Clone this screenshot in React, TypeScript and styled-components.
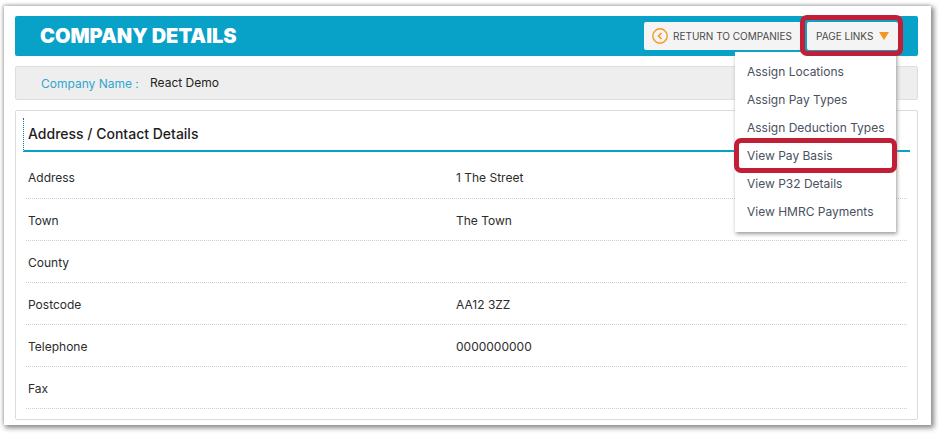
import React from 'react';
import styled, { createGlobalStyle } from 'styled-components';

const GlobalStyle = createGlobalStyle`
  html, body {
    margin: 0;
    background: #fff;
    font-family: Inter, "Liberation Sans", sans-serif;
  }
`;

const Page = styled.div`
  width: 941px;
  height: 434px;
  padding: 6px 10px 9px 4px;
  box-sizing: border-box;
  overflow: hidden;
`;

const Frame = styled.div`
  position: relative;
  height: 100%;
  box-sizing: border-box;
  padding: 10px 13px 5px 11px;
  background: #fff;
  box-shadow: 2px 2px 5px 1px #8a8a8a, -1px -1px 3px #c8c8c8;
  display: flex;
  flex-direction: column;
  gap: 10px;
`;

const Header = styled.header`
  height: 40px;
  flex: none;
  display: flex;
  align-items: center;
  padding: 0 20px 0 25px;
  background: #08a1c8;
  border-radius: 2px;
`;

const Title = styled.h1`
  flex: 1;
  margin: 0;
  color: #fff;
  font-size: 20px;
  font-weight: 900;
`;

const Actions = styled.div`
  display: flex;
  gap: 6px;
`;

const ActionButton = styled.button`
  height: 28px;
  display: flex;
  align-items: center;
  gap: 5px;
  padding: 0 8px;
  border: 0;
  border-radius: 2px;
  background: #f4f4f4;
  color: #4a4a4a;
  font: 400 10px Inter, sans-serif;
  white-space: nowrap;

  svg {
    flex: none;
  }
`;

const ReturnButton = styled(ActionButton)`
  width: 157px;
`;

const LinksButton = styled(ActionButton)`
  width: 91px;
  padding: 0 9px;
  gap: 6px;
`;

const InfoBar = styled.div`
  height: 34px;
  flex: none;
  box-sizing: border-box;
  display: flex;
  align-items: center;
  padding: 0 25px;
  background: #eeeeee;
  border: 1px solid #dedede;
  border-radius: 2px;
  font-size: 12px;
`;

const InfoLabel = styled.span`
  color: #2ea7d0;
  width: 109px;
`;

const InfoValue = styled.span`
  color: #222;
  margin-top: -2px;
`;

const Card = styled.section`
  flex: 1;
  box-sizing: border-box;
  padding: 7px 10px 0 10px;
  border: 1px solid #dcdcdc;
  border-radius: 2px;
`;

const CardTitle = styled.h2`
  height: 34px;
  margin: 0 -3px 5px -3px;
  box-sizing: border-box;
  padding: 7px 0 0 4px;
  border-left: 1px dotted #08769a;
  border-bottom: 2px solid #08a1c8;
  color: #1d1d1d;
  font-size: 14px;
  font-weight: 500;
`;

const Row = styled.div`
  height: 42px;
  box-sizing: border-box;
  display: grid;
  grid-template-columns: 428px 1fr;
  align-items: center;
  padding: 2px 0 0 2px;
  border-bottom: 1px dotted #cfcfcf;
  color: #2c2c2c;
  font-size: 12px;

  &:first-of-type {
    padding-top: 0;
  }
`;

const Menu = styled.ul`
  position: absolute;
  left: 731px;
  top: 46px;
  width: 161px;
  height: 180px;
  box-sizing: border-box;
  margin: 0;
  padding: 6px 0;
  list-style: none;
  background: #fff;
  box-shadow: 1px 2px 4px #9a9a9a;
`;

const MenuItem = styled.li`
  height: 28px;
  line-height: 27px;
  padding-left: 12px;
  color: #4a5160;
  font-size: 12px;
`;

const Highlight = styled.div`
  position: absolute;
  box-sizing: border-box;
  border: 5px solid #c21f37;
  border-radius: 7px;
  pointer-events: none;
`;

const LinksHighlight = styled(Highlight)`
  left: 796px;
  top: 9px;
  width: 103px;
  height: 41px;
`;

const PayBasisHighlight = styled(Highlight)`
  left: 730px;
  top: 132px;
  width: 163px;
  height: 35px;
`;

const rows = [
  ['Address', '1 The Street'],
  ['Town', 'The Town'],
  ['County', ''],
  ['Postcode', 'AA12 3ZZ'],
  ['Telephone', '0000000000'],
  ['Fax', ''],
];

const links = [
  'Assign Locations',
  'Assign Pay Types',
  'Assign Deduction Types',
  'View Pay Basis',
  'View P32 Details',
  'View HMRC Payments',
];

const App = () => (
  <Page>
    <GlobalStyle />
    <Frame>
      <Header>
        <Title>COMPANY DETAILS</Title>
        <Actions>
          <ReturnButton>
            <svg width="16" height="16" viewBox="0 0 16 16" fill="none" stroke="#f39a1f" strokeWidth="1.4">
              <circle cx="8" cy="8" r="7.2" />
              <path d="M9.5 5 6.5 8l3 3" strokeWidth="1.6" />
            </svg>
            RETURN TO COMPANIES
          </ReturnButton>
          <LinksButton>
            PAGE LINKS
            <svg width="10" height="8" viewBox="0 0 10 8">
              <path d="M0 0h10L5 8z" fill="#f7941d" />
            </svg>
          </LinksButton>
        </Actions>
      </Header>
      <InfoBar>
        <InfoLabel>Company Name :</InfoLabel>
        <InfoValue>React Demo</InfoValue>
      </InfoBar>
      <Card>
        <CardTitle>Address / Contact Details</CardTitle>
        {rows.map(([label, value]) => (
          <Row key={label}>
            <span>{label}</span>
            <span>{value}</span>
          </Row>
        ))}
      </Card>
      <Menu>
        {links.map((link) => (
          <MenuItem key={link}>{link}</MenuItem>
        ))}
      </Menu>
      <LinksHighlight />
      <PayBasisHighlight />
    </Frame>
  </Page>
);

export default App;
